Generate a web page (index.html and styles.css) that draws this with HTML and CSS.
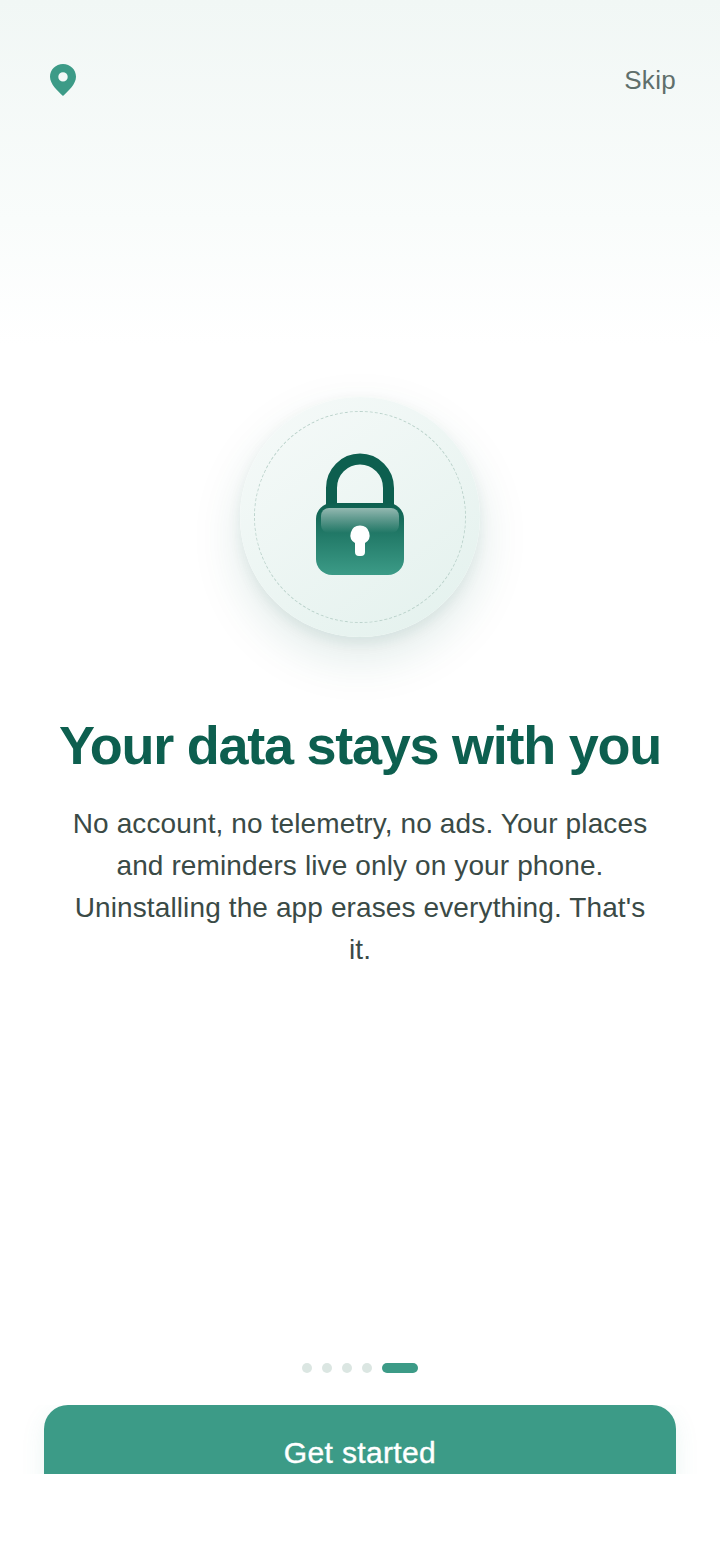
FILE: index.html
```html
<!DOCTYPE html>
<html lang="en">
<head>
<meta charset="utf-8">
<title>Your data stays with you</title>
<link rel="stylesheet" href="styles.css">
</head>
<body>
<main class="screen">
  <header class="top">
    <svg class="pin" viewBox="0 0 26 32" aria-hidden="true">
      <path fill="#3c9b87" fill-rule="evenodd" d="M13 0C5.800 0 0 5.600 0 12.800 0 20 7.500 27 13 32c5.500-5 13-12 13-19.200C26 5.600 20.200 0 13 0Zm0 8.200a4.700 4.700 0 1 1 0 9.400 4.700 4.700 0 0 1 0-9.400Z"/>
    </svg>
    <span class="skip">Skip</span>
  </header>

  <section class="hero">
    <div class="disc">
      <div class="ring"></div>
      <svg class="lock" viewBox="0 0 88 122" aria-hidden="true">
        <defs>
          <linearGradient id="body" x1="0" y1="0" x2="0" y2="1">
            <stop offset="0" stop-color="#0d5f4f"/>
            <stop offset="1" stop-color="#3c9b87"/>
          </linearGradient>
          <linearGradient id="gloss" x1="0" y1="0" x2="0" y2="1">
            <stop offset="0" stop-color="#fff" stop-opacity=".55"/>
            <stop offset="1" stop-color="#fff" stop-opacity="0"/>
          </linearGradient>
        </defs>
        <path d="M15.500 56V35a28.500 29 0 0 1 57 0v21" fill="none" stroke="#0d5f4f" stroke-width="11"/>
        <rect x="0" y="50" width="88" height="72" rx="16" fill="url(#body)"/>
        <path d="M5 72V63a8 8 0 0 1 8-8h62a8 8 0 0 1 8 8v9a8 8 0 0 1-8 8H13a8 8 0 0 1-8-8Z" fill="url(#gloss)"/>
        <path fill="#fff" d="M44 72.500a9.500 9.500 0 0 1 5 17.600V99a4 4 0 0 1-4 4h-2a4 4 0 0 1-4-4v-8.900a9.500 9.500 0 0 1 5-17.600Z"/>
      </svg>
    </div>
    <h1 class="title">Your data stays with you</h1>
    <p class="copy">No account, no telemetry, no ads. Your places and reminders live only on your phone. Uninstalling the app erases everything. That's it.</p>
  </section>

  <div class="dots">
    <span class="dot"></span>
    <span class="dot"></span>
    <span class="dot"></span>
    <span class="dot"></span>
    <span class="dot dot-active"></span>
  </div>

  <div class="cta-clip">
    <button class="cta" type="button">Get started</button>
  </div>
</main>
</body>
</html>
```

FILE: styles.css
```css
* {
  box-sizing: border-box;
}

html,
body {
  margin: 0;
  padding: 0;
  background: #fff;
}

.screen {
  width: 720px;
  height: 1561px;
  overflow: hidden;
  display: flex;
  flex-direction: column;
  font-family: "Liberation Sans", Arial, sans-serif;
  background: linear-gradient(#f1f7f5 0, #f9fcfb 220px, #fff 345px);
}

.top {
  display: flex;
  justify-content: space-between;
  align-items: center;
  padding: 64px 44px 0 50px;
  height: 96px;
}

.pin {
  width: 26px;
  height: 32px;
  display: block;
}

.skip {
  font-size: 26px;
  line-height: 32px;
  letter-spacing: 0.3px;
  color: #5f6f6b;
}

.hero {
  display: flex;
  flex-direction: column;
  align-items: center;
  padding: 301px 60px 0;
  flex: 1;
}

.disc {
  width: 240px;
  height: 240px;
  border-radius: 50%;
  display: flex;
  align-items: center;
  justify-content: center;
  position: relative;
  background: linear-gradient(145deg, #f6faf9, #e3f1ed);
  box-shadow: 0 20px 50px rgba(13, 95, 79, 0.13), 0 6px 14px rgba(13, 95, 79, 0.08);
}

.ring {
  position: absolute;
  inset: 14px;
  border-radius: 50%;
  border: 1px dashed #bcd3cc;
}

.lock {
  width: 88px;
  height: 122px;
  display: block;
  margin-bottom: 6px;
}

.title {
  margin: 72px -40px 0;
  font-size: 54px;
  line-height: 72px;
  font-weight: 700;
  letter-spacing: -1.25px;
  color: #0d5f4f;
  text-align: center;
  white-space: nowrap;
}

.copy {
  margin: 22px 0 0;
  font-size: 28px;
  line-height: 42px;
  letter-spacing: 0.12px;
  color: #3a4a46;
  text-align: center;
}

.dots {
  display: flex;
  justify-content: center;
  gap: 10px;
  height: 10px;
}

.dot {
  width: 10px;
  height: 10px;
  border-radius: 5px;
  background: #dbe6e2;
}

.dot-active {
  width: 36px;
  background: #3c9b87;
}

.cta-clip {
  margin: 32px 0 87px;
  padding: 0 24px;
  height: 69px;
  overflow: hidden;
}

.cta {
  display: block;
  width: 632px;
  height: 96px;
  margin: 0 20px;
  border: 0;
  border-radius: 24px;
  background: #3c9b87;
  color: #fff;
  font-family: inherit;
  font-size: 30px;
  font-weight: 400;
  letter-spacing: 0.35px;
  -webkit-text-stroke: 0.4px #fff;
  box-shadow: 0 8px 24px rgba(60, 155, 135, 0.1);
}
```
